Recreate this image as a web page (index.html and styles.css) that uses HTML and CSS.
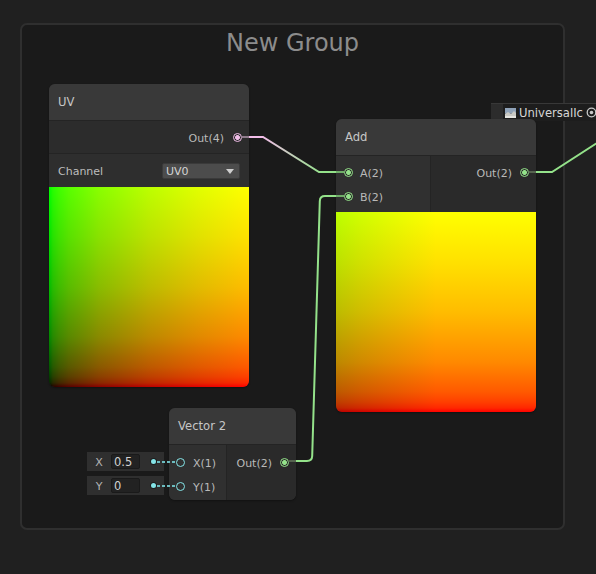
FILE: index.html
```html
<!DOCTYPE html>
<html>
<head>
<meta charset="utf-8">
<link rel="stylesheet" href="styles.css">
</head>
<body>
<div class="canvas">
  <div class="group"><div class="group-title">New Group</div></div>

  <div class="master">
    <div class="master-tab"></div>
    <svg class="master-icon" width="11" height="10" viewBox="0 0 11 10">
      <rect x="0" y="0" width="11" height="10" fill="#6f7a86"/>
      <rect x="0" y="0" width="11" height="5" fill="#8fa2b8"/>
      <path d="M0 6 L3 4 L6 6 L9 3 L11 5 L11 10 L0 10 Z" fill="#c9c9c4"/>
      <rect x="0" y="8" width="11" height="2" fill="#e4e4e0"/>
    </svg>
    <span class="master-label">UniversalIc</span>
    <svg class="master-target" width="11" height="11" viewBox="0 0 11 11">
      <circle cx="5.5" cy="5.5" r="4.3" fill="none" stroke="#c8c8c8" stroke-width="1.3"/>
      <circle cx="5.5" cy="5.5" r="1.8" fill="#c8c8c8"/>
    </svg>
  </div>

  <div class="node node-uv">
    <div class="node-title">UV</div>
    <div class="uv-out-row">
      <span class="port-label">Out(4)</span>
      <span class="port port-pink"></span>
    </div>
    <div class="uv-channel-row">
      <span class="field-label">Channel</span>
      <div class="dropdown"><span>UV0</span><span class="caret"></span></div>
    </div>
    <div class="preview preview-uv"></div>
  </div>

  <div class="node node-add">
    <div class="node-title">Add</div>
    <div class="ports">
      <div class="col-in">
        <div class="in-row"><span class="port port-green"></span><span class="port-label">A(2)</span></div>
        <div class="in-row"><span class="port port-green"></span><span class="port-label">B(2)</span></div>
      </div>
      <div class="col-out">
        <div class="out-row"><span class="port-label">Out(2)</span><span class="port port-green"></span></div>
      </div>
    </div>
    <div class="preview preview-add"></div>
  </div>

  <div class="node node-vec">
    <div class="node-title">Vector 2</div>
    <div class="ports">
      <div class="col-in">
        <div class="in-row"><span class="port port-cyan"></span><span class="port-label">X(1)</span></div>
        <div class="in-row"><span class="port port-cyan"></span><span class="port-label">Y(1)</span></div>
      </div>
      <div class="col-out">
        <div class="out-row"><span class="port-label">Out(2)</span><span class="port port-green"></span></div>
      </div>
    </div>
  </div>

  <div class="inline inline-x">
    <span class="inline-label">X</span>
    <span class="inline-value">0.5</span>
    <span class="inline-dot"></span>
  </div>
  <div class="inline inline-y">
    <span class="inline-label">Y</span>
    <span class="inline-value">0</span>
    <span class="inline-dot"></span>
  </div>

  <svg class="edges" width="596" height="574" viewBox="0 0 596 574">
    <defs>
      <linearGradient id="pg" gradientUnits="userSpaceOnUse" x1="262" y1="0" x2="322" y2="0">
        <stop offset="0" stop-color="#f2bde9"/>
        <stop offset="1" stop-color="#94e28a"/>
      </linearGradient>
    </defs>
    <path d="M249 137 H263 L319 172 H337" fill="none" stroke="url(#pg)" stroke-width="2"/>
    <path d="M241.5 137 H249" stroke="#8f7b8c" stroke-width="2"/>
    <path d="M336 172 H344" stroke="#6fae68" stroke-width="2"/>
    <path d="M296 461 H307 Q312 461 312.2 456 L319.8 201 Q320 196 325 196 H337" fill="none" stroke="#94e28a" stroke-width="2"/>
    <path d="M336 196 H344" stroke="#6fae68" stroke-width="2"/>
    <path d="M288.5 461 H296" stroke="#56634f" stroke-width="2"/>
    <path d="M536 172 H552 L600 141" fill="none" stroke="#94e28a" stroke-width="2"/>
    <path d="M528.5 172 H536" stroke="#56634f" stroke-width="2"/>
    <path d="M157 462 H176" stroke="#6cbcbf" stroke-width="2" stroke-dasharray="3 2"/>
    <path d="M157 486 H176" stroke="#6cbcbf" stroke-width="2" stroke-dasharray="3 2"/>
  </svg>
</div>
</body>
</html>
```
FILE: styles.css
```css
html, body {
  margin: 0;
  padding: 0;
  background: #202020;
}
body {
  font-family: "DejaVu Sans", Verdana, sans-serif;
  width: 596px;
  height: 574px;
  overflow: hidden;
}
.canvas {
  position: relative;
  width: 596px;
  height: 574px;
  overflow: hidden;
  background: #202020;
}
.group {
  position: absolute;
  left: 20px;
  top: 23px;
  width: 545px;
  height: 507px;
  box-sizing: border-box;
  border: 2px solid #2f2f2f;
  border-radius: 7px;
  background: #1a1a1a;
}
.group-title {
  text-align: center;
  font-size: 24px;
  line-height: 30px;
  color: #8c8c8c;
  padding-top: 3px;
}

/* master stub at the top right */
.master {
  position: absolute;
  left: 491px;
  top: 103px;
  width: 115px;
  height: 18px;
  box-sizing: border-box;
  border-top: 1px solid #383838;
  background: #1d1d1d;
  display: flex;
  align-items: center;
}
.master-tab {
  width: 12px;
  height: 15px;
  align-self: flex-start;
  background: #2c2c2c;
}
.master-icon {
  margin-left: 2px;
  flex: none;
}
.master-label {
  margin-left: 3px;
  font-size: 11.6px;
  color: #d6d6d6;
  white-space: nowrap;
}
.master-target {
  margin-left: 3px;
  flex: none;
}

/* nodes */
.node {
  position: absolute;
  border-radius: 6px;
  overflow: hidden;
  background: #2b2b2b;
  box-shadow: 0 1px 2px rgba(0,0,0,0.35);
}
.node-uv { left: 49px; top: 84px; width: 200px; }
.node-add { left: 336px; top: 119px; width: 200px; }
.node-vec { left: 169px; top: 408px; width: 127px; }

.node-title {
  height: 37px;
  box-sizing: border-box;
  border-bottom: 1px solid #242424;
  background: #393939;
  color: #c6c6c6;
  font-size: 11.6px;
  padding-left: 9px;
  display: flex;
  align-items: center;
}

.port-label {
  font-size: 11px;
  color: #b9b9b9;
  white-space: nowrap;
  padding-top: 2px;
}
.port {
  flex: none;
  width: 9px;
  height: 9px;
  box-sizing: border-box;
  border-radius: 50%;
  border: 1.4px solid;
}
.port-pink {
  border-color: #f0bde8;
  background: radial-gradient(circle, #f0bde8 0 2.1px, #2b2b2b 2.7px);
}
.port-green {
  border-color: #94e28a;
  background: radial-gradient(circle, #94e28a 0 2.1px, #2b2b2b 2.7px);
}
.port-cyan {
  border-color: #84e4e7;
  background: transparent;
}

.uv-out-row {
  height: 33px;
  box-sizing: border-box;
  border-bottom: 1px solid #242424;
  background: #2c2c2c;
  display: flex;
  align-items: center;
  justify-content: flex-end;
  padding-right: 7.5px;
  gap: 8.5px;
}
.uv-channel-row {
  height: 33px;
  background: #2e2e2e;
  display: flex;
  align-items: center;
  justify-content: space-between;
  padding: 0 9px 0 9px;
}
.field-label {
  font-size: 11px;
  color: #bdbdbd;
  padding-top: 2px;
}
.dropdown {
  width: 78px;
  height: 16px;
  box-sizing: border-box;
  background: #4c4c4c;
  border: 1px solid #3a3a3a;
  border-radius: 2px;
  display: flex;
  align-items: center;
  justify-content: space-between;
  padding: 1px 5px 0 3px;
  font-size: 11px;
  color: #d4d4d4;
}
.caret {
  width: 0;
  height: 0;
  border-left: 4px solid transparent;
  border-right: 4px solid transparent;
  border-top: 5px solid #cfcfcf;
}

.preview {
  width: 200px;
  height: 200px;
  background-blend-mode: screen;
}
.preview-uv {
  background-image:
    linear-gradient(to right, #000 0%, rgb(39,0,0) 2%, rgb(63,0,0) 5%, rgb(89,0,0) 10%, rgb(137,0,0) 25%, rgb(188,0,0) 50%, rgb(225,0,0) 75%, rgb(255,0,0) 100%),
    linear-gradient(to top, #000 0%, rgb(0,39,0) 2%, rgb(0,63,0) 5%, rgb(0,89,0) 10%, rgb(0,137,0) 25%, rgb(0,188,0) 50%, rgb(0,225,0) 75%, rgb(0,255,0) 100%);
}
.preview-add {
  background-image:
    linear-gradient(to right, rgb(188,0,0) 0%, rgb(208,0,0) 12%, rgb(225,0,0) 25%, rgb(241,0,0) 38%, rgb(255,0,0) 50%, rgb(255,0,0) 100%),
    linear-gradient(to top, #000 0%, rgb(0,39,0) 2%, rgb(0,63,0) 5%, rgb(0,89,0) 10%, rgb(0,137,0) 25%, rgb(0,188,0) 50%, rgb(0,225,0) 75%, rgb(0,255,0) 100%);
}

.ports {
  display: flex;
}
.node-add .ports { height: 56px; }
.node-vec .ports { height: 55px; }
.col-in {
  background: #303030;
  border-right: 1px solid #242424;
  padding-top: 4px;
  box-sizing: border-box;
}
.node-add .col-in { width: 95px; }
.node-vec .col-in { width: 58px; padding-top: 5px; }
.col-out {
  flex: 1;
  background: #2a2a2a;
  padding-top: 4px;
}
.node-vec .col-out { padding-top: 5px; }
.in-row {
  height: 24px;
  display: flex;
  align-items: center;
  padding-left: 7.5px;
  gap: 7.5px;
}
.node-vec .in-row { padding-left: 7px; gap: 8px; }
.out-row {
  height: 24px;
  display: flex;
  align-items: center;
  justify-content: flex-end;
  padding-right: 7.5px;
  gap: 7.5px;
}

/* inline value fields */
.inline {
  position: absolute;
  left: 87px;
  width: 77px;
  height: 19px;
  background: #2f2f2f;
  display: flex;
  align-items: center;
}
.inline-x { top: 452px; }
.inline-y { top: 476px; }
.inline-label {
  font-size: 11px;
  color: #b4b4b4;
  width: 24px;
  text-align: center;
  padding-top: 1px;
}
.inline-value {
  width: 29px;
  height: 15px;
  box-sizing: border-box;
  background: #222222;
  border: 1px solid #1a1a1a;
  border-radius: 2px;
  font-size: 11.5px;
  line-height: 14px;
  padding-left: 2px;
  color: #d2d2d2;
}
.inline-dot {
  width: 5px;
  height: 5px;
  border-radius: 50%;
  background: #84e4e7;
  box-shadow: 0 0 0 1px #1e1e1e;
  margin-left: auto;
  margin-right: 8px;
}

.edges {
  position: absolute;
  left: 0;
  top: 0;
  pointer-events: none;
}
```
